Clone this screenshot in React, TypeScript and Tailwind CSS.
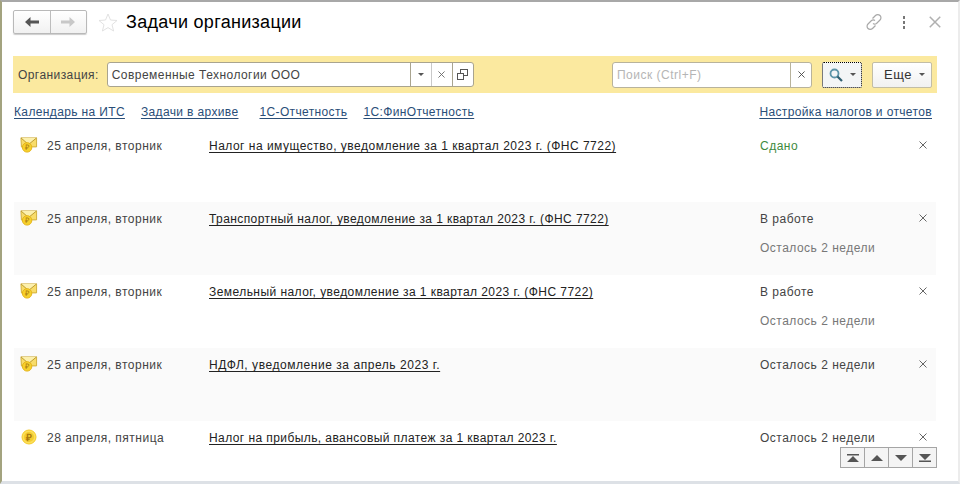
import React from "react";

const font = { fontFamily: '"Liberation Sans", Arial, sans-serif' };

function Envelope() {
  return (
    <svg width="18" height="18" viewBox="0 0 19 18" className="shrink-0">
      <path d="M1 1.5 H17.5 V11 H13 L8 15 L1.5 11 Z" fill="#f8dc6a" stroke="#cfae3a" strokeWidth="1" />
      <path d="M1 1.5 L9 8.5 L17.5 1.5" fill="#fcf0ad" stroke="#b9972a" strokeWidth="1" />
      <circle cx="7.5" cy="11.5" r="5" fill="#f6d02c" stroke="#e4b318" strokeWidth="1" />
      <text x="7.5" y="14.5" textAnchor="middle" fontSize="8" fill="#a9780f" style={font}>₽</text>
    </svg>
  );
}

function Coin() {
  return (
    <svg width="18" height="18" viewBox="0 0 18 18" className="shrink-0">
      <circle cx="9" cy="9" r="7" fill="#fbdf5a" stroke="#f5cb2a" strokeWidth="1" />
      <circle cx="9" cy="9" r="5" fill="#f4cb2e" />
      <text x="9" y="12.5" textAnchor="middle" fontSize="10" fontWeight="bold" fill="#a9780f" style={font}>₽</text>
    </svg>
  );
}

function Cross({ size = 8, color = "#666" }: { size?: number; color?: string }) {
  return (
    <svg width={size} height={size} viewBox="0 0 8 8">
      <path d="M0.5 0.5 L7.5 7.5 M7.5 0.5 L0.5 7.5" stroke={color} strokeWidth="1" fill="none" />
    </svg>
  );
}

function Caret() {
  return (
    <svg width="6" height="3" viewBox="0 0 6 3">
      <path d="M0 0 H6 L3 3 Z" fill="#555" />
    </svg>
  );
}

type Row = { icon: "env" | "coin"; date: string; title: string; track: string; s1: string; s2?: string; green?: boolean; alt?: boolean };

const rows: Row[] = [
  { icon: "env", date: "25 апреля, вторник", title: "Налог на имущество, уведомление за 1 квартал 2023 г. (ФНС 7722)", track: "tracking-[0.49px]", s1: "Сдано", green: true },
  { icon: "env", date: "25 апреля, вторник", title: "Транспортный налог, уведомление за 1 квартал 2023 г. (ФНС 7722)", track: "tracking-[0.41px]", s1: "В работе", s2: "Осталось 2 недели", alt: true },
  { icon: "env", date: "25 апреля, вторник", title: "Земельный налог, уведомление за 1 квартал 2023 г. (ФНС 7722)", track: "tracking-[0.44px]", s1: "В работе", s2: "Осталось 2 недели" },
  { icon: "env", date: "25 апреля, вторник", title: "НДФЛ, уведомление за апрель 2023 г.", track: "tracking-[0.55px]", s1: "Осталось 2 недели", alt: true },
  { icon: "coin", date: "28 апреля, пятница", title: "Налог на прибыль, авансовый платеж за 1 квартал 2023 г.", track: "tracking-[0.42px]", s1: "Осталось 2 недели" },
];

const linkCls = "text-[#2a4e78] underline underline-offset-2 decoration-[#2a4e78] tracking-[0.36px]";

export default function App() {
  return (
    <div className="relative w-[960px] h-[484px] overflow-hidden bg-white text-[12px] tracking-[0.49px] border-t-2 border-l-2 border-r-2 border-b-[3px] border-t-[#a8a8a8] border-l-[#a3a37f] border-r-[#ececec] border-b-[#dde1e6] text-[#333]" style={font}>
      {/* Title bar */}
      <div className="flex items-center h-[40px] pl-[11px] pr-[17px]">
        <div className="flex h-[24px] w-[74px] rounded-[2px] border border-[#b9b9b9] bg-gradient-to-b from-white to-[#f1f1f1] shadow-[0_1px_1px_#ccc]">
          <div className="flex flex-1 items-center justify-center border-r border-[#bdbdbd]">
            <svg width="14" height="10" viewBox="0 0 14 10"><path d="M5.5 0 L0 5 L5.5 10 V6.5 H14 V3.5 H5.5 Z" fill="#555" /></svg>
          </div>
          <div className="flex flex-1 items-center justify-center">
            <svg width="14" height="10" viewBox="0 0 14 10"><path d="M8.5 0 L14 5 L8.5 10 V6.5 H0 V3.5 H8.5 Z" fill="#c8c8c8" /></svg>
          </div>
        </div>
        <svg width="20" height="19" viewBox="0 0 20 19" className="ml-[11px]">
          <path d="M10 1 L12.5 7 L19 7.5 L14 11.7 L15.6 18 L10 14.6 L4.4 18 L6 11.7 L1 7.5 L7.5 7 Z" fill="#fff" stroke="#e2e2e2" strokeWidth="1" />
        </svg>
        <div className="ml-[8px] text-[18px] leading-none tracking-[0.3px] text-black">Задачи организации</div>
        <div className="ml-auto flex items-center">
          <svg width="18" height="18" viewBox="0 0 18 18" fill="none" stroke="#a8a8a8" strokeWidth="1.2">
            <path d="M7.5 5.5 L10.5 2.5 a3 3 0 0 1 4.5 4.5 L11.5 10.5 a3 3 0 0 1 -3.5 0" />
            <path d="M10.5 12.5 L7.5 15.5 a3 3 0 0 1 -4.5 -4.5 L6.5 7.5 a3 3 0 0 1 3.5 0" />
          </svg>
          <div className="ml-[20px] flex flex-col gap-[2px]">
            <div className="w-[2px] h-[3px] bg-[#777]" />
            <div className="w-[2px] h-[3px] bg-[#777]" />
            <div className="w-[2px] h-[3px] bg-[#777]" />
          </div>
          <div className="ml-[24px]"><Cross size={12} color="#b0b0b0" /></div>
        </div>
      </div>

      {/* Yellow toolbar */}
      <div className="mt-[14px] ml-[11px] mr-[21px] h-[37px] bg-[#fbe99f] flex items-center pl-[5px] pr-[5px]">
        <span className="text-[#444] mr-[8px] tracking-[0.42px]">Организация:</span>
        <div className="flex h-[25px] w-[367px] rounded-[3px] border border-[#a9a48f] bg-white">
          <div className="flex-1 flex items-center pl-[4px] text-[#444] tracking-[0.45px]">Современные Технологии ООО</div>
          <div className="w-[21px] border-l border-[#a9a48f] flex items-center justify-center"><Caret /></div>
          <div className="w-[21px] border-l border-[#c9c9c9] flex items-center justify-center"><Cross size={7} /></div>
          <div className="w-[21px] border-l border-[#a9a48f] flex items-center justify-center">
            <svg width="11" height="11" viewBox="0 0 11 11" fill="#fff" stroke="#555"><rect x="3.5" y="0.5" width="7" height="6" /><rect x="0.5" y="4.5" width="6" height="6" /></svg>
          </div>
        </div>
        <div className="ml-auto flex h-[26px] w-[200px] rounded-[3px] border border-[#b8b39c] bg-white">
          <div className="flex-1 flex items-center pl-[4px] text-[#b5b5b5]">Поиск (Ctrl+F)</div>
          <div className="w-[21px] border-l border-[#b8b39c] flex items-center justify-center"><Cross size={7} color="#444" /></div>
        </div>
        <div className="ml-[10px] flex items-center justify-center gap-[7px] h-[26px] w-[40px] rounded-[2px] border border-dotted border-black bg-[#f3f5f6]">
          <svg width="14" height="14" viewBox="0 0 14 14" fill="none" stroke="#5c94a8" strokeWidth="1.8"><circle cx="5.5" cy="5.5" r="4" /><path d="M8.5 8.5 L13 13" stroke="#2f5f70" strokeWidth="2.2" /></svg>
          <Caret />
        </div>
        <div className="ml-[10px] flex items-center justify-center gap-[7px] pl-[5px] h-[26px] w-[60px] rounded-[2px] border border-[#c2bda6] bg-gradient-to-b from-white to-[#f1f1f1] text-[13px] text-[#333]">
          Еще
          <Caret />
        </div>
      </div>

      {/* Links */}
      <div className="mt-[9px] ml-[12px] mr-[26px] h-[20px] flex items-center">
        <a className={linkCls}>Календарь на ИТС</a>
        <a className={`${linkCls} ml-[16px]`}>Задачи в архиве</a>
        <a className={`${linkCls} ml-[21px]`}>1С-Отчетность</a>
        <a className={`${linkCls} ml-[16px]`}>1С:ФинОтчетность</a>
        <a className={`${linkCls} ml-auto`}>Настройка налогов и отчетов</a>
      </div>

      {/* Rows */}
      <div className="mt-[7px] ml-[12px] mr-[22px] flex flex-col">
        {rows.map((r, i) => (
          <div key={i} className={`flex h-[73px] shrink-0 pt-[7px] ${r.alt ? "bg-[#fafafa]" : "bg-white"}`}>
            <div className="w-[33px] pl-[6px] shrink-0">{r.icon === "env" ? <Envelope /> : <Coin />}</div>
            <div className="w-[162px] shrink-0 leading-[20px] text-[#444]">{r.date}</div>
            <div className={`w-[551px] shrink-0 leading-[20px] text-[#222] underline underline-offset-2 ${r.track}`}>{r.title}</div>
            <div className="flex-1 leading-[20px]">
              <div className={r.green ? "text-[#3e8a3e]" : "text-[#444]"}>{r.s1}</div>
              {r.s2 && <div className="mt-[9px] text-[#777]">{r.s2}</div>}
            </div>
            <div className="w-[17px] shrink-0 pt-[5px]"><Cross /></div>
          </div>
        ))}
      </div>

      {/* Floating scroll buttons */}
      <div className="absolute left-[838px] top-[445px] flex h-[21px] w-[97px] border border-[#a5a5a5] bg-[#f4f4f4]">
        <div className="flex-1 flex items-center justify-center border-r border-[#a5a5a5]">
          <svg width="12" height="8" viewBox="0 0 12 8" fill="#555"><path d="M0 0 H12 V1.5 H0 Z M6 2 L12 8 H0 Z" /></svg>
        </div>
        <div className="flex-1 flex items-center justify-center border-r border-[#a5a5a5]">
          <svg width="12" height="6" viewBox="0 0 12 6" fill="#555"><path d="M6 0 L12 6 H0 Z" /></svg>
        </div>
        <div className="flex-1 flex items-center justify-center border-r border-[#a5a5a5]">
          <svg width="12" height="6" viewBox="0 0 12 6" fill="#555"><path d="M0 0 H12 L6 6 Z" /></svg>
        </div>
        <div className="flex-1 flex items-center justify-center">
          <svg width="12" height="8" viewBox="0 0 12 8" fill="#555"><path d="M0 0 H12 L6 6 Z M0 6.5 H12 V8 H0 Z" /></svg>
        </div>
      </div>
    </div>
  );
}
